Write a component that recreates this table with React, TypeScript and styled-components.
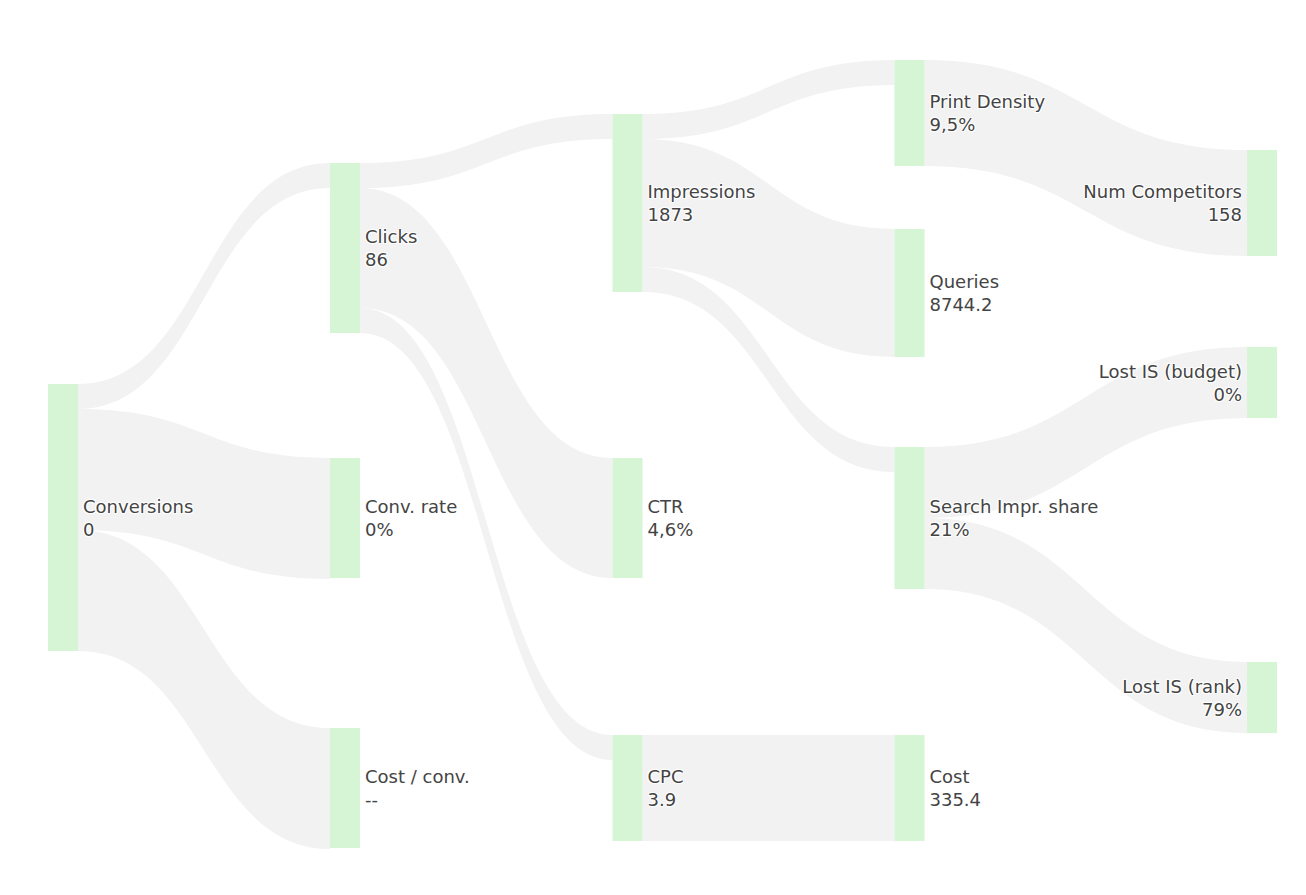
import React from "react";
import styled, { createGlobalStyle } from "styled-components";

const GlobalStyle = createGlobalStyle`
  html, body {
    margin: 0;
    padding: 0;
    background: #fff;
  }
`;

type Node = {
  id: string;
  label: string;
  value: string;
  x: number;
  y0: number;
  y1: number;
  right?: boolean;
};

type Link = {
  from: string;
  to: string;
  s: number; // offset on source
  t: number; // offset on target
  w: number; // thickness
};

const NODE_W = 30;

const nodes: Node[] = [
  { id: "conv", label: "Conversions", value: "0", x: 48, y0: 384, y1: 651 },
  { id: "clicks", label: "Clicks", value: "86", x: 330, y0: 163, y1: 333 },
  { id: "rate", label: "Conv. rate", value: "0%", x: 330, y0: 458, y1: 578 },
  { id: "cpconv", label: "Cost / conv.", value: "--", x: 330, y0: 728, y1: 848 },
  { id: "impr", label: "Impressions", value: "1873", x: 612.5, y0: 114, y1: 292 },
  { id: "ctr", label: "CTR", value: "4,6%", x: 612.5, y0: 458, y1: 578 },
  { id: "cpc", label: "CPC", value: "3.9", x: 612.5, y0: 735, y1: 841 },
  { id: "print", label: "Print Density", value: "9,5%", x: 894.5, y0: 60, y1: 166 },
  { id: "queries", label: "Queries", value: "8744.2", x: 894.5, y0: 229, y1: 357 },
  { id: "sis", label: "Search Impr. share", value: "21%", x: 894.5, y0: 447, y1: 589 },
  { id: "cost", label: "Cost", value: "335.4", x: 894.5, y0: 735, y1: 841 },
  { id: "comp", label: "Num Competitors", value: "158", x: 1247, y0: 150, y1: 256, right: true },
  { id: "budget", label: "Lost IS (budget)", value: "0%", x: 1247, y0: 347, y1: 418, right: true },
  { id: "rank", label: "Lost IS (rank)", value: "79%", x: 1247, y0: 662, y1: 733, right: true },
];

const links: Link[] = [
  { from: "conv", to: "clicks", s: 0, t: 0, w: 25 },
  { from: "conv", to: "rate", s: 25, t: 0, w: 121 },
  { from: "conv", to: "cpconv", s: 146, t: 0, w: 121 },
  { from: "clicks", to: "impr", s: 0, t: 0, w: 25 },
  { from: "clicks", to: "ctr", s: 25, t: 0, w: 120 },
  { from: "clicks", to: "cpc", s: 145, t: 0, w: 25 },
  { from: "impr", to: "print", s: 0, t: 0, w: 25 },
  { from: "impr", to: "queries", s: 25, t: 0, w: 128 },
  { from: "impr", to: "sis", s: 153, t: 0, w: 25 },
  { from: "print", to: "comp", s: 0, t: 0, w: 106 },
  { from: "sis", to: "budget", s: 0, t: 0, w: 71 },
  { from: "sis", to: "rank", s: 71, t: 0, w: 71 },
  { from: "cpc", to: "cost", s: 0, t: 0, w: 106 },
];

const byId = Object.fromEntries(nodes.map((n) => [n.id, n]));

function linkPath(l: Link) {
  const a = byId[l.from];
  const b = byId[l.to];
  const x0 = a.x + NODE_W;
  const x1 = b.x;
  const xm = (x0 + x1) / 2;
  const y0 = a.y0 + l.s;
  const y1 = b.y0 + l.t;
  return [
    `M${x0},${y0}`,
    `C${xm},${y0} ${xm},${y1} ${x1},${y1}`,
    `L${x1},${y1 + l.w}`,
    `C${xm},${y1 + l.w} ${xm},${y0 + l.w} ${x0},${y0 + l.w}`,
    "Z",
  ].join(" ");
}

export default function App() {
  return (
    <>
      <GlobalStyle />
      <Page>
        <Chart viewBox="0 0 1306 895" width={1306} height={895}>
          <g>
            {links.map((l) => (
              <Flow key={l.from + l.to} d={linkPath(l)} />
            ))}
          </g>
          <g>
            {nodes.map((n) => (
              <Bar key={n.id} x={n.x} y={n.y0} width={NODE_W} height={n.y1 - n.y0} />
            ))}
          </g>
          <g>
            {nodes.map((n) => {
              const mid = (n.y0 + n.y1) / 2;
              const tx = n.right ? n.x - 5 : n.x + NODE_W + 5;
              return (
                <Label key={n.id} x={tx} y={mid - 5} $right={!!n.right}>
                  <tspan x={tx}>{n.label}</tspan>
                  <tspan x={tx} dy={23}>
                    {n.value}
                  </tspan>
                </Label>
              );
            })}
          </g>
        </Chart>
      </Page>
    </>
  );
}

const Page = styled.div`
  width: 1306px;
  height: 895px;
  overflow: hidden;
  background: #fff;
`;

const Chart = styled.svg`
  display: block;
`;

const Flow = styled.path`
  fill: #f2f2f2;
`;

const Bar = styled.rect`
  fill: #d5f5d5;
`;

const Label = styled.text<{ $right: boolean }>`
  font-family: "DejaVu Sans", Verdana, sans-serif;
  font-size: 18px;
  fill: #444;
  text-anchor: ${(p) => (p.$right ? "end" : "start")};
  text-shadow: 1px 1px 1px #fff, -1px -1px 1px #fff, 1px -1px 1px #fff, -1px 1px 1px #fff;
`;
